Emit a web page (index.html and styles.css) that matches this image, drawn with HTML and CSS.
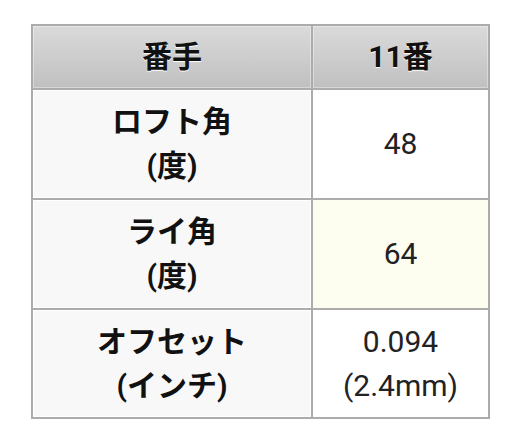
FILE: index.html
```html
<!DOCTYPE html>
<html lang="ja">
<head>
<meta charset="utf-8">
<link rel="stylesheet" href="styles.css">
</head>
<body>
<table class="spec">
  <thead>
    <tr>
      <th class="label">番手</th>
      <th class="value">11番</th>
    </tr>
  </thead>
  <tbody>
    <tr class="row">
      <th class="label">ロフト角<br>(度)</th>
      <td class="value">48</td>
    </tr>
    <tr class="row">
      <th class="label">ライ角<br>(度)</th>
      <td class="value hl">64</td>
    </tr>
    <tr class="row last">
      <th class="label">オフセット<br>(インチ)</th>
      <td class="value">0.094<br>(2.4mm)</td>
    </tr>
  </tbody>
</table>
</body>
</html>
```
FILE: styles.css
```css
html, body {
  margin: 0;
  background: #ffffff;
}
body {
  padding: 24px 0 0 31px;
  font-family: Roboto, "Noto Sans CJK JP", sans-serif;
}
.spec {
  width: 459px;
  box-sizing: border-box;
  border-collapse: separate;
  border-spacing: 0;
  border-top: 2px solid #acacac;
  border-left: 2px solid #acacac;
}
.spec th, .spec td {
  border-right: 2px solid #acacac;
  border-bottom: 2px solid #acacac;
  text-align: center;
  vertical-align: middle;
  padding: 0;
  font-size: 30px;
  line-height: 44px;
}
.spec .label {
  width: 278px;
}
.spec thead th {
  height: 62px;
  font-weight: 700;
  color: #111;
  background: linear-gradient(#dadada, #c0c0c0);
  text-shadow: 0 1px 1px #ffffff;
  box-shadow: inset 0 0 0 1px rgba(255, 255, 255, 0.35);
}
.spec .row th,
.spec .row td {
  height: 108px;
}
.spec .row.last th,
.spec .row.last td {
  height: 107px;
}
.spec tbody th {
  font-weight: 700;
  color: #111;
  background: #f8f8f8;
  box-shadow: inset 0 0 0 1px #ffffff;
}
.spec tbody td {
  font-weight: 400;
  color: #222;
  background: #ffffff;
}
.spec tbody td.hl {
  background: #fdfef0;
}
```
